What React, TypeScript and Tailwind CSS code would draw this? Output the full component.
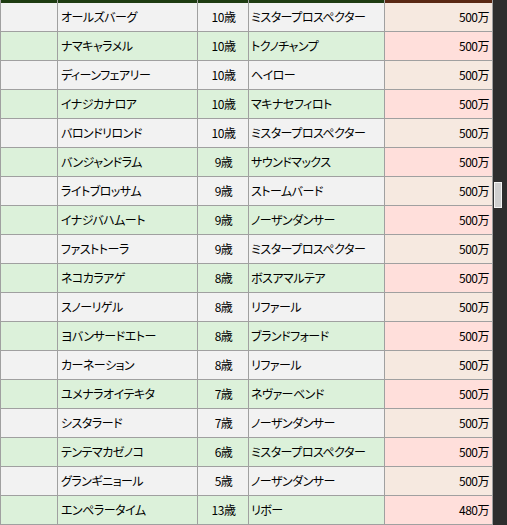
import React from "react";

const rows: [string, string, string, string][] = [
  ["オールズバーグ", "10歳", "ミスタープロスペクター", "500万"],
  ["ナマキャラメル", "10歳", "トクノチャンプ", "500万"],
  ["ディーンフェアリー", "10歳", "ヘイロー", "500万"],
  ["イナジカナロア", "10歳", "マキナセフィロト", "500万"],
  ["バロンドリロンド", "10歳", "ミスタープロスペクター", "500万"],
  ["バンジャンドラム", "9歳", "サウンドマックス", "500万"],
  ["ライトブロッサム", "9歳", "ストームバード", "500万"],
  ["イナジバハムート", "9歳", "ノーザンダンサー", "500万"],
  ["ファストトーラ", "9歳", "ミスタープロスペクター", "500万"],
  ["ネコカラアゲ", "8歳", "ボスアマルテア", "500万"],
  ["スノーリゲル", "8歳", "リファール", "500万"],
  ["ヨバンサードエトー", "8歳", "ブランドフォード", "500万"],
  ["カーネーション", "8歳", "リファール", "500万"],
  ["ユメナラオイテキタ", "7歳", "ネヴァーベンド", "500万"],
  ["シスタラード", "7歳", "ノーザンダンサー", "500万"],
  ["テンテマカゼノコ", "6歳", "ミスタープロスペクター", "500万"],
  ["グランギニョール", "5歳", "ノーザンダンサー", "500万"],
  ["エンペラータイム", "13歳", "リボー", "480万"],
];

export default function App() {
  return (
    <div
      className="flex w-[507px] h-[525px] overflow-hidden bg-[#f2f2f2] text-black text-[12px] tracking-[-0.5px] [font-feature-settings:'palt']"
      style={{ fontFamily: '"Noto Sans CJK JP", "Noto Sans", sans-serif' }}
    >
      <div className="w-[493px] flex flex-col border-l border-[#a0a0a0]">
        <div className="flex h-[3px] shrink-0">
          <div className="w-[57px] bg-[#1e3c12] border-r border-[#a0a0a0]" />
          <div className="w-[140px] bg-[#1e3c12] border-r border-[#a0a0a0]" />
          <div className="w-[51px] bg-[#1e3c12] border-r border-[#a0a0a0]" />
          <div className="w-[136px] bg-[#1e3c12] border-r border-[#a0a0a0]" />
          <div className="w-[108px] bg-[#5a2814] border-r border-[#a0a0a0]" />
        </div>
        {rows.map((r, i) => {
          const even = i % 2 === 1;
          const bg = even ? "bg-[#dcf1da]" : "bg-[#f2f2f2]";
          const pbg = even ? "bg-[#ffdfdb]" : "bg-[#f6e9e0]";
          return (
            <div key={i} className="flex h-[29px] shrink-0 border-b border-[#a0a0a0] leading-[28px]">
              <div className={`w-[57px] border-r border-[#a0a0a0] ${bg}`} />
              <div className={`w-[140px] border-r border-[#a0a0a0] pl-[3px] whitespace-nowrap ${bg}`}>{r[0]}</div>
              <div className={`w-[51px] border-r border-[#a0a0a0] text-center pl-[1px] ${bg}`}>{r[1]}</div>
              <div className={`w-[136px] border-r border-[#a0a0a0] pl-[2px] whitespace-nowrap ${bg}`}>{r[2]}</div>
              <div className={`w-[108px] border-r border-[#a0a0a0] text-right pr-[3px] ${pbg}`}>{r[3]}</div>
            </div>
          );
        })}
      </div>
      <div className="w-[14px] bg-[#2e2e2e] flex flex-col pt-[182px] pl-[1px]">
        <div className="w-[8px] h-[26px] bg-[#cfcfcf] border border-[#f4f4f4]" />
      </div>
    </div>
  );
}
